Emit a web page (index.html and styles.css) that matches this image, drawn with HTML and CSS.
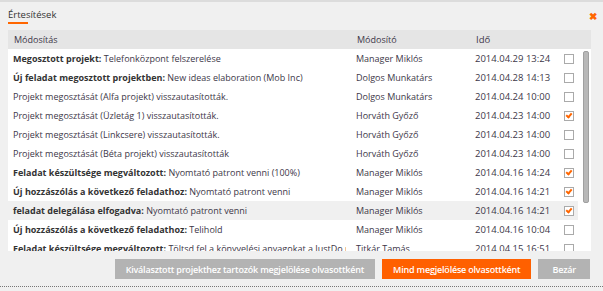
FILE: index.html
```html
<!DOCTYPE html>
<html lang="hu">
<head>
  <meta charset="UTF-8" />
  <title>Értesítések</title>
  <link rel="stylesheet" href="styles.css">
</head>
<body>
  <div class="dialog">
    <div class="title-bar">
      <h2 class="title">Értesítések</h2>
      <span class="close">&#x2716;</span>
    </div>

    <!-- Notification list -->
    <div class="list">
      <div class="list-head">
        <span class="col-text">Módosítás</span>
        <span class="col-user">Módosító</span>
        <span class="col-date">Idő</span>
      </div>
      <div class="list-body">
        <div class="rows">
          <div class="row"><span class="col-text"><b>Megosztott projekt:</b> Telefonközpont felszerelése</span><span class="col-user">Manager Miklós</span><span class="col-date">2014.04.29 13:24</span><span class="check"></span></div>
          <div class="row"><span class="col-text"><b>Új feladat megosztott projektben:</b> New ideas elaboration (Mob Inc)</span><span class="col-user">Dolgos Munkatárs</span><span class="col-date">2014.04.28 14:13</span><span class="check"></span></div>
          <div class="row"><span class="col-text">Projekt megosztását (Alfa projekt) visszautasították.</span><span class="col-user">Dolgos Munkatárs</span><span class="col-date">2014.04.24 10:00</span><span class="check"></span></div>
          <div class="row"><span class="col-text">Projekt megosztását (Üzletág 1) visszautasították.</span><span class="col-user">Horváth Győző</span><span class="col-date">2014.04.23 14:00</span><span class="check checked"></span></div>
          <div class="row"><span class="col-text">Projekt megosztását (Linkcsere) visszautasították.</span><span class="col-user">Horváth Győző</span><span class="col-date">2014.04.23 14:00</span><span class="check"></span></div>
          <div class="row"><span class="col-text">Projekt megosztását (Béta projekt) visszautasították</span><span class="col-user">Horváth Győző</span><span class="col-date">2014.04.23 14:00</span><span class="check"></span></div>
          <div class="row"><span class="col-text"><b>Feladat készültsége megváltozott:</b> Nyomtató patront venni (100%)</span><span class="col-user">Manager Miklós</span><span class="col-date">2014.04.16 14:24</span><span class="check checked"></span></div>
          <div class="row"><span class="col-text"><b>Új hozzászólás a következő feladathoz:</b> Nyomtató patront venni</span><span class="col-user">Manager Miklós</span><span class="col-date">2014.04.16 14:21</span><span class="check checked"></span></div>
          <div class="row active"><span class="col-text"><b>feladat delegálása elfogadva:</b> Nyomtató patront venni</span><span class="col-user">Manager Miklós</span><span class="col-date">2014.04.16 14:21</span><span class="check checked"></span></div>
          <div class="row"><span class="col-text"><b>Új hozzászólás a következő feladathoz:</b> Telihold</span><span class="col-user">Manager Miklós</span><span class="col-date">2014.04.16 10:04</span><span class="check"></span></div>
          <div class="row"><span class="col-text"><b>Feladat készültsége megváltozott:</b> Töltsd fel a könyvelési anyagokat a JustDo rendszerbe</span><span class="col-user">Titkár Tamás</span><span class="col-date">2014.04.15 16:51</span><span class="check"></span></div>
        </div>
        <div class="scrollbar"><div class="thumb"></div></div>
      </div>
    </div>

    <div class="actions">
      <button class="btn btn-grey">Kiválasztott projekthez tartozók megjelölése olvasottként</button>
      <button class="btn btn-orange">Mind megjelölése olvasottként</button>
      <button class="btn btn-grey btn-close">Bezár</button>
    </div>
  </div>
  <div class="page-edge"></div>
</body>
</html>
```

FILE: styles.css
```css
body {
  margin: 0;
  background-color: #f0f0f0;
  font-family: 'Open Sans', sans-serif;
  font-size: 9px;
  color: #3d3748;
  border-top: 2px solid #dcdcdc;
}

.dialog {
  padding: 0 12px 0 8px;
}

.title-bar {
  display: flex;
  justify-content: space-between;
  align-items: flex-start;
  height: 28px;
}

.title {
  margin: 0;
  padding-top: 7px;
  font-size: 9.5px;
  font-weight: normal;
  color: #333;
  line-height: 12px;
}

.title::after {
  content: "";
  display: block;
  width: 20px;
  height: 2px;
  margin-top: 1px;
  background-color: #ff6600;
}

.close {
  color: #ff6600;
  font-size: 10px;
  line-height: 10px;
  margin-top: 9px;
  margin-right: -6px;
  font-weight: bold;
}

.list-head {
  display: flex;
  align-items: center;
  height: 19px;
  background-color: #e5e5e5;
}

.list-head .col-text {
  padding-left: 6px;
}

.col-text {
  flex-shrink: 0;
  width: 333px;
  padding-left: 5px;
  margin-right: 10px;
  white-space: nowrap;
  overflow: hidden;
}

.col-user {
  flex-shrink: 0;
  width: 119px;
  white-space: nowrap;
}

.col-date {
  flex-shrink: 0;
  width: 89px;
  font-size: 9.5px;
  white-space: nowrap;
}

.list-body {
  display: flex;
  height: 202px;
  overflow: hidden;
  background-color: white;
}

.rows {
  width: 570px;
}

.row {
  display: flex;
  align-items: center;
  height: 19px;
}

.row.active {
  background-color: #f0f0f0;
}

.row b {
  color: #333;
}

.check {
  flex-shrink: 0;
  width: 8px;
  height: 8px;
  border: 1px solid #aaa;
  background-color: white;
  position: relative;
}

.check.checked::after {
  content: "";
  position: absolute;
  left: 2px;
  top: 0px;
  width: 2px;
  height: 4px;
  border: solid #ff6600;
  border-width: 0 2px 2px 0;
  transform: rotate(40deg);
}

.scrollbar {
  flex: 1;
  padding: 2px 0 0 5px;
}

.thumb {
  width: 4px;
  height: 150px;
  background-color: #b8b8b8;
  border: 1px solid #a0a0a0;
  border-radius: 2px;
}

.actions {
  display: flex;
  justify-content: flex-end;
  gap: 7px;
  margin-top: 8px;
  margin-right: 1px;
}

.btn {
  height: 20px;
  border: none;
  padding: 0 11px;
  font-family: 'Open Sans', sans-serif;
  font-size: 9px;
  font-weight: 600;
  letter-spacing: -0.2px;
  color: white;
  cursor: pointer;
}

.btn-grey {
  background-color: #b3b3b3;
}

.btn-orange {
  background-color: #ff6000;
}

.btn-close {
  padding: 0 14px;
}

.page-edge {
  margin-top: 7px;
  border-top: 1px dotted #777;
}
```
